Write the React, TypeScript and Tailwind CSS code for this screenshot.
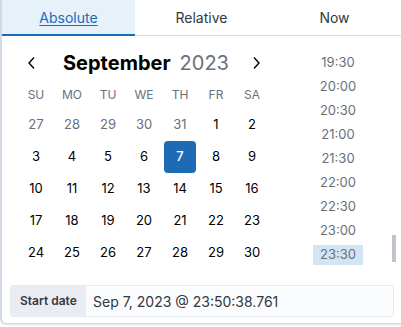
import React from "react";

const font = { fontFamily: "Inter, 'Noto Sans', sans-serif" };

const prev = [27, 28, 29, 30, 31];
const days: { d: number; muted: boolean }[] = [
  ...prev.map((d) => ({ d, muted: true })),
  ...Array.from({ length: 30 }, (_, i) => ({ d: i + 1, muted: false })),
];
const names = ["SU", "MO", "TU", "WE", "TH", "FR", "SA"];
const times = ["19:30", "20:00", "20:30", "21:00", "21:30", "22:00", "22:30", "23:00", "23:30"];

export default function App() {
  return (
    <div className="w-[401px] h-[327px] bg-white overflow-hidden" style={font}>
      <div className="w-[410px] h-[324px] bg-white border-l-2 border-b border-[#d3dae6] rounded-bl-[6px] shadow-[0_1px_2px_rgba(0,0,0,0.12)] flex flex-col">
        {/* tabs */}
        <div className="flex h-[36px] w-[399px] border-b border-[#d3dae6]">
          <div className="w-[133px] h-[36px] bg-[#e6f1fa] border-b-2 border-[#1a6bb5] flex items-center justify-center text-[14px] text-[#1a6bb5] underline underline-offset-2">
            Absolute
          </div>
          <div className="w-[133px] flex items-center justify-center text-[14px] text-[#343741]">Relative</div>
          <div className="w-[133px] flex items-center justify-center text-[14px] text-[#343741]">Now</div>
        </div>
        <div className="flex h-[233px]">
          {/* calendar */}
          <div className="w-[290px] pl-[16px] pt-[12px]">
            <div className="h-[30px] w-[252px] flex items-center">
              <div className="w-[28px] flex justify-center">
                <svg width="12" height="14" viewBox="0 0 12 14" fill="none" stroke="#000" strokeWidth="1.4">
                  <path d="M8 1.5 L3 7 L8 12.5" />
                </svg>
              </div>
              <div className="ml-[17px] flex items-baseline gap-[9px]">
                <span className="text-[20px] font-bold text-black">September</span>
                <span className="text-[20px] text-[#69707d]">2023</span>
              </div>
              <div className="ml-auto w-[28px] flex justify-center">
                <svg width="12" height="14" viewBox="0 0 12 14" fill="none" stroke="#000" strokeWidth="1.4">
                  <path d="M4 1.5 L9 7 L4 12.5" />
                </svg>
              </div>
            </div>
            <div className="grid grid-cols-[repeat(7,36px)] mt-[5px] h-[24px] items-center">
              {names.map((n) => (
                <div key={n} className="text-center text-[12px] text-[#69707d]">{n}</div>
              ))}
            </div>
            <div className="grid grid-cols-[repeat(7,36px)] auto-rows-[32px] mt-[2px]">
              {days.map((x, i) => {
                const sel = !x.muted && x.d === 7;
                return (
                  <div key={i} className="flex items-center justify-center">
                    <div
                      className={
                        "w-[32px] h-[32px] flex items-center justify-center text-[13px] rounded-[4px] " +
                        (sel ? "bg-[#1d6bb4] text-white font-medium" : x.muted ? "text-[#69707d]" : "text-black")
                      }
                    >
                      {x.d}
                    </div>
                  </div>
                );
              })}
            </div>
          </div>
          {/* times */}
          <div className="flex-1 relative pt-[15px]">
            <div className="w-[92px] flex flex-col items-center">
              {times.map((t) => (
                <div
                  key={t}
                  className={
                    "w-[50px] flex items-center justify-center text-[13px] text-[#69707d] " +
                    (t === "23:30" ? "bg-[#d3e4f3] h-[20px] mt-[2px]" : "h-[24px]")
                  }
                >
                  {t}
                </div>
              ))}
            </div>
            <div className="absolute left-[100px] top-[199px] w-[4px] h-[27px] bg-[#bfc3cb]" />
          </div>
        </div>
        {/* input */}
        <div className="mt-[16px] ml-[8px] w-[384px] h-[32px] flex border border-[#e3e8f2] rounded-[3px] overflow-hidden">
          <div className="w-[75px] bg-[#e9edf3] flex items-center pl-[9px] text-[12px] font-semibold text-[#343741]">
            Start date
          </div>
          <div className="flex-1 bg-[#fbfcfd] flex items-center pl-[7px] text-[14px] text-[#343741]">
            Sep 7, 2023 @ 23:50:38.761
          </div>
        </div>
      </div>
    </div>
  );
}
